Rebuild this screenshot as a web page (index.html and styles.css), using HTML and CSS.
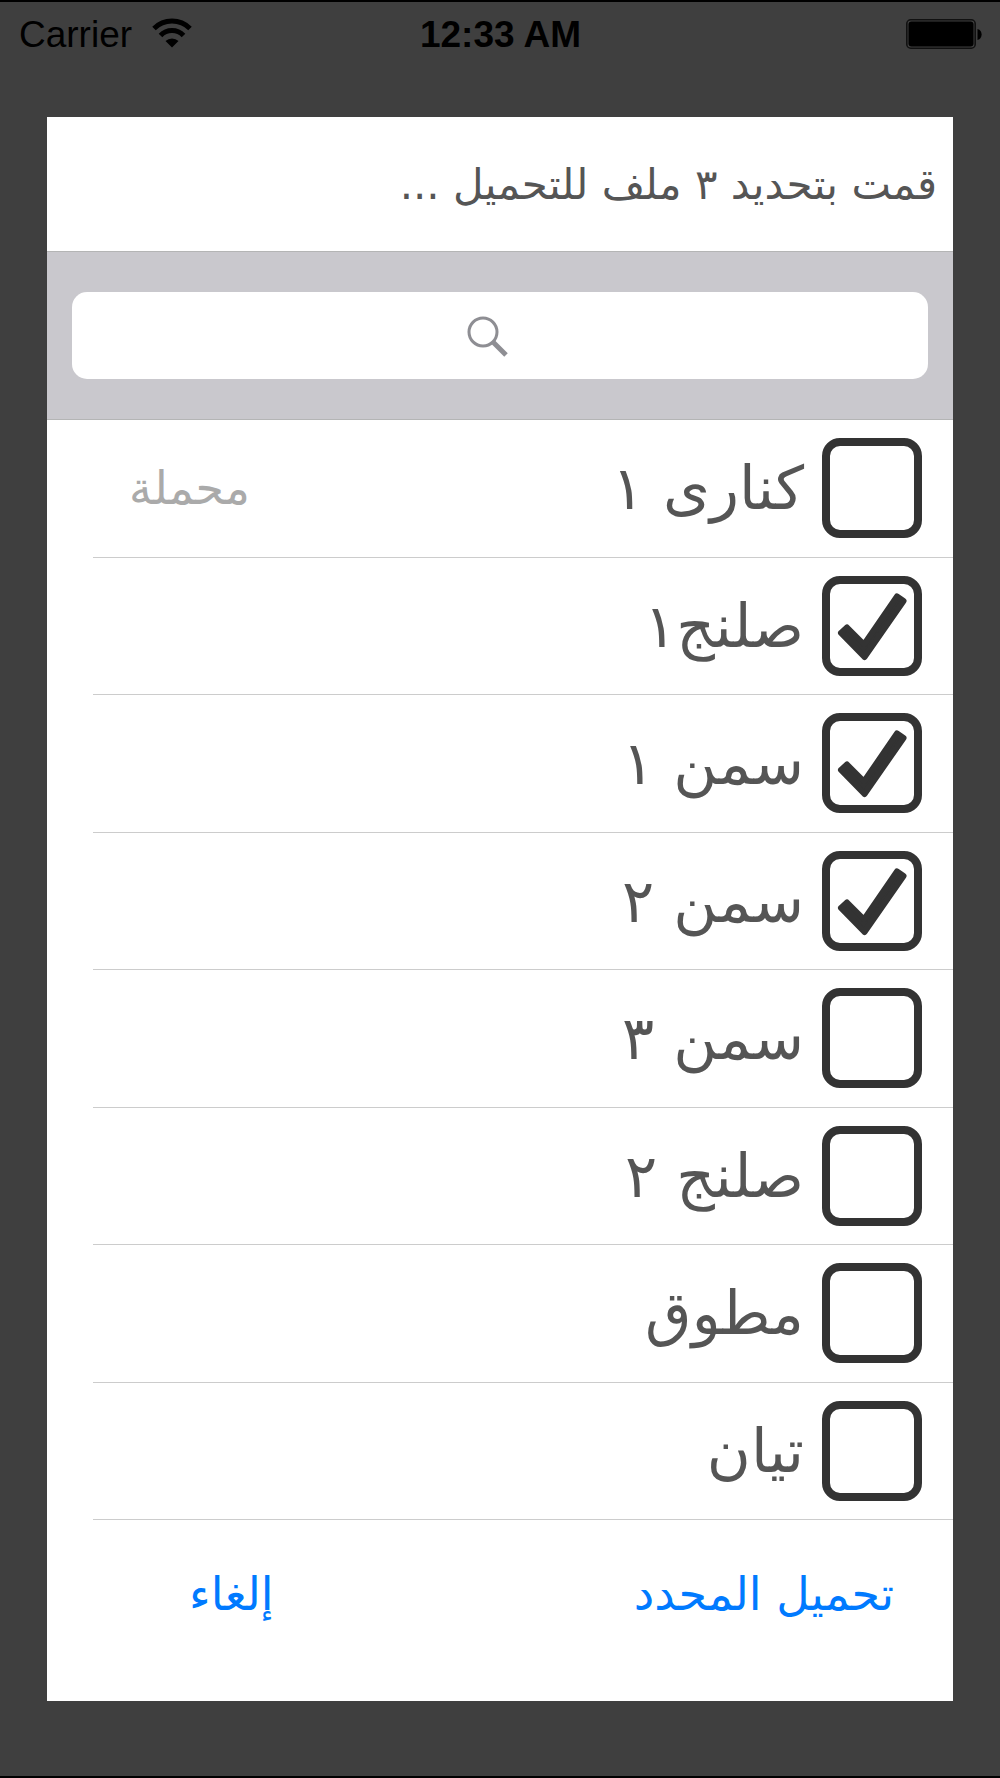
FILE: index.html
```
<!DOCTYPE html>
<html lang="ar">
<head>
  <meta charset="UTF-8">
  <meta name="viewport" content="width=device-width, initial-scale=1.0">
  <title>تحميل الملفات</title>
  <link rel="stylesheet" href="styles.css">
</head>
<body>
  <header class="status-bar">
    <div class="carrier">
      <span>Carrier</span>
      <svg class="wifi" viewBox="0 0 40 30" aria-hidden="true">
        <path d="M2 10.500A25.500 25.500 0 0 1 38 10.500" fill="none" stroke="#000" stroke-width="5"/>
        <path d="M8.500 17.500A16 16 0 0 1 31.500 17.500" fill="none" stroke="#000" stroke-width="5"/>
        <path d="M20 29.500L13.500 23A9.500 9.500 0 0 1 26.500 23Z"/>
      </svg>
    </div>
    <span class="time">12:33 AM</span>
    <svg class="battery" viewBox="0 0 76 30" aria-hidden="true">
      <rect x="0.800" y="0.800" width="68.400" height="28.400" rx="4" fill="none" stroke="#111" stroke-width="1.600"/>
      <rect x="2.500" y="2.500" width="65" height="25" rx="3"/>
      <path d="M71.500 10C77 11 77 20 71.500 21Z"/>
    </svg>
  </header>

  <main class="dialog" dir="rtl">
    <h1 class="dialog-title">قمت بتحديد ٣ ملف للتحميل ...</h1>

    <div class="search-bar">
      <input class="search-input" type="search" aria-label="بحث">
    </div>

    <ul class="file-list">
      <li class="file-row">
        <label class="file-label"><input class="file-check" type="checkbox">كنارى ١</label>
        <span class="file-status">محملة</span>
      </li>
      <li class="file-row">
        <label class="file-label"><input class="file-check" type="checkbox" checked>صلنج١</label>
      </li>
      <li class="file-row">
        <label class="file-label"><input class="file-check" type="checkbox" checked>سمن ١</label>
      </li>
      <li class="file-row">
        <label class="file-label"><input class="file-check" type="checkbox" checked>سمن ٢</label>
      </li>
      <li class="file-row">
        <label class="file-label"><input class="file-check" type="checkbox">سمن ٣</label>
      </li>
      <li class="file-row">
        <label class="file-label"><input class="file-check" type="checkbox">صلنج ٢</label>
      </li>
      <li class="file-row">
        <label class="file-label"><input class="file-check" type="checkbox">مطوق</label>
      </li>
      <li class="file-row">
        <label class="file-label"><input class="file-check" type="checkbox">تيان</label>
      </li>
    </ul>

    <div class="actions">
      <button class="btn" type="button">تحميل المحدد</button>
      <button class="btn" type="button">إلغاء</button>
    </div>
  </main>
</body>
</html>
```
FILE: styles.css
```
* {
  box-sizing: border-box;
}
body {
  margin: 0;
  min-height: 100vh;
  display: flex;
  flex-direction: column;
  background: #3f3f3f;
  border-top: 2px solid #000;
  border-bottom: 2px solid #000;
  font-family: "DejaVu Sans", sans-serif;
  color: #555;
}

/* Status bar */
.status-bar {
  display: grid;
  grid-template-columns: 1fr auto 1fr;
  align-items: center;
  padding: 11px 18px 0 19px;
  font-family: "Liberation Sans", Arial, sans-serif;
  font-size: 37px;
  line-height: 44px;
  color: #000;
}
.carrier {
  display: flex;
  align-items: center;
  gap: 20px;
}
.wifi {
  width: 40px;
  height: 30px;
  margin-bottom: 4px;
}
.time {
  font-weight: bold;
}
.battery {
  width: 76px;
  height: 30px;
  margin-bottom: 2px;
  justify-self: end;
}

/* Dialog */
.dialog {
  flex: 1;
  display: flex;
  flex-direction: column;
  margin: 60px 47px 75px;
  background: #fff;
}
.dialog-title {
  margin: 0;
  padding: 36px 16px 34px;
  font-size: 42px;
  font-weight: normal;
  line-height: 64px;
}
.search-bar {
  padding: 40px 25px;
  background: #c9c8cd;
  border-top: 1px solid #b4b5b5;
  border-bottom: 1px solid #b4b5b5;
}
.search-input {
  display: block;
  width: 100%;
  height: 87px;
  padding: 0 24px;
  border: none;
  border-radius: 15px;
  appearance: none;
  background: #fff url("data:image/svg+xml,%3Csvg xmlns='http://www.w3.org/2000/svg' width='66' height='42' fill='none' stroke='%238e8e93'%3E%3Ccircle cx='16' cy='17' r='14' stroke-width='3'/%3E%3Cpath d='M26 27L39 40' stroke-width='5'/%3E%3C/svg%3E") no-repeat center;
  font: inherit;
  font-size: 42px;
  color: #555;
}

/* File list */
.file-list {
  display: grid;
  grid-auto-rows: 1fr;
  min-height: 1100px;
  margin: 0;
  padding: 0;
  list-style: none;
}
.file-row {
  display: flex;
  align-items: center;
  justify-content: space-between;
  margin-left: 46px;
  padding: 0 31px 0 36px;
  border-bottom: 1px solid #ccc;
}
.file-label {
  display: flex;
  align-items: center;
  gap: 18px;
  font-size: 60px;
  line-height: 100px;
}
.file-check {
  width: 100px;
  height: 100px;
  margin: 0;
  border: 8px solid #333;
  border-radius: 18px;
  appearance: none;
  background: #fff;
}
.file-check:checked {
  background: #fff url("data:image/svg+xml,%3Csvg xmlns='http://www.w3.org/2000/svg' viewBox='8 8 84 84' fill='%23333' stroke='%23333' stroke-width='6' stroke-linejoin='round'%3E%3Cpath d='M19 57L25 51.500L42 68.500L75 20.500L81.500 25L42.500 81Z'/%3E%3C/svg%3E") no-repeat center;
}
.file-status {
  font-size: 46px;
  color: #aaa;
}

/* Bottom buttons */
.actions {
  display: flex;
  justify-content: space-between;
  padding: 42px 59px 0 142px;
}
.btn {
  padding: 0;
  border: none;
  background: none;
  color: #007aff;
  font-family: inherit;
  font-size: 46px;
  line-height: 64px;
  cursor: pointer;
}
```
